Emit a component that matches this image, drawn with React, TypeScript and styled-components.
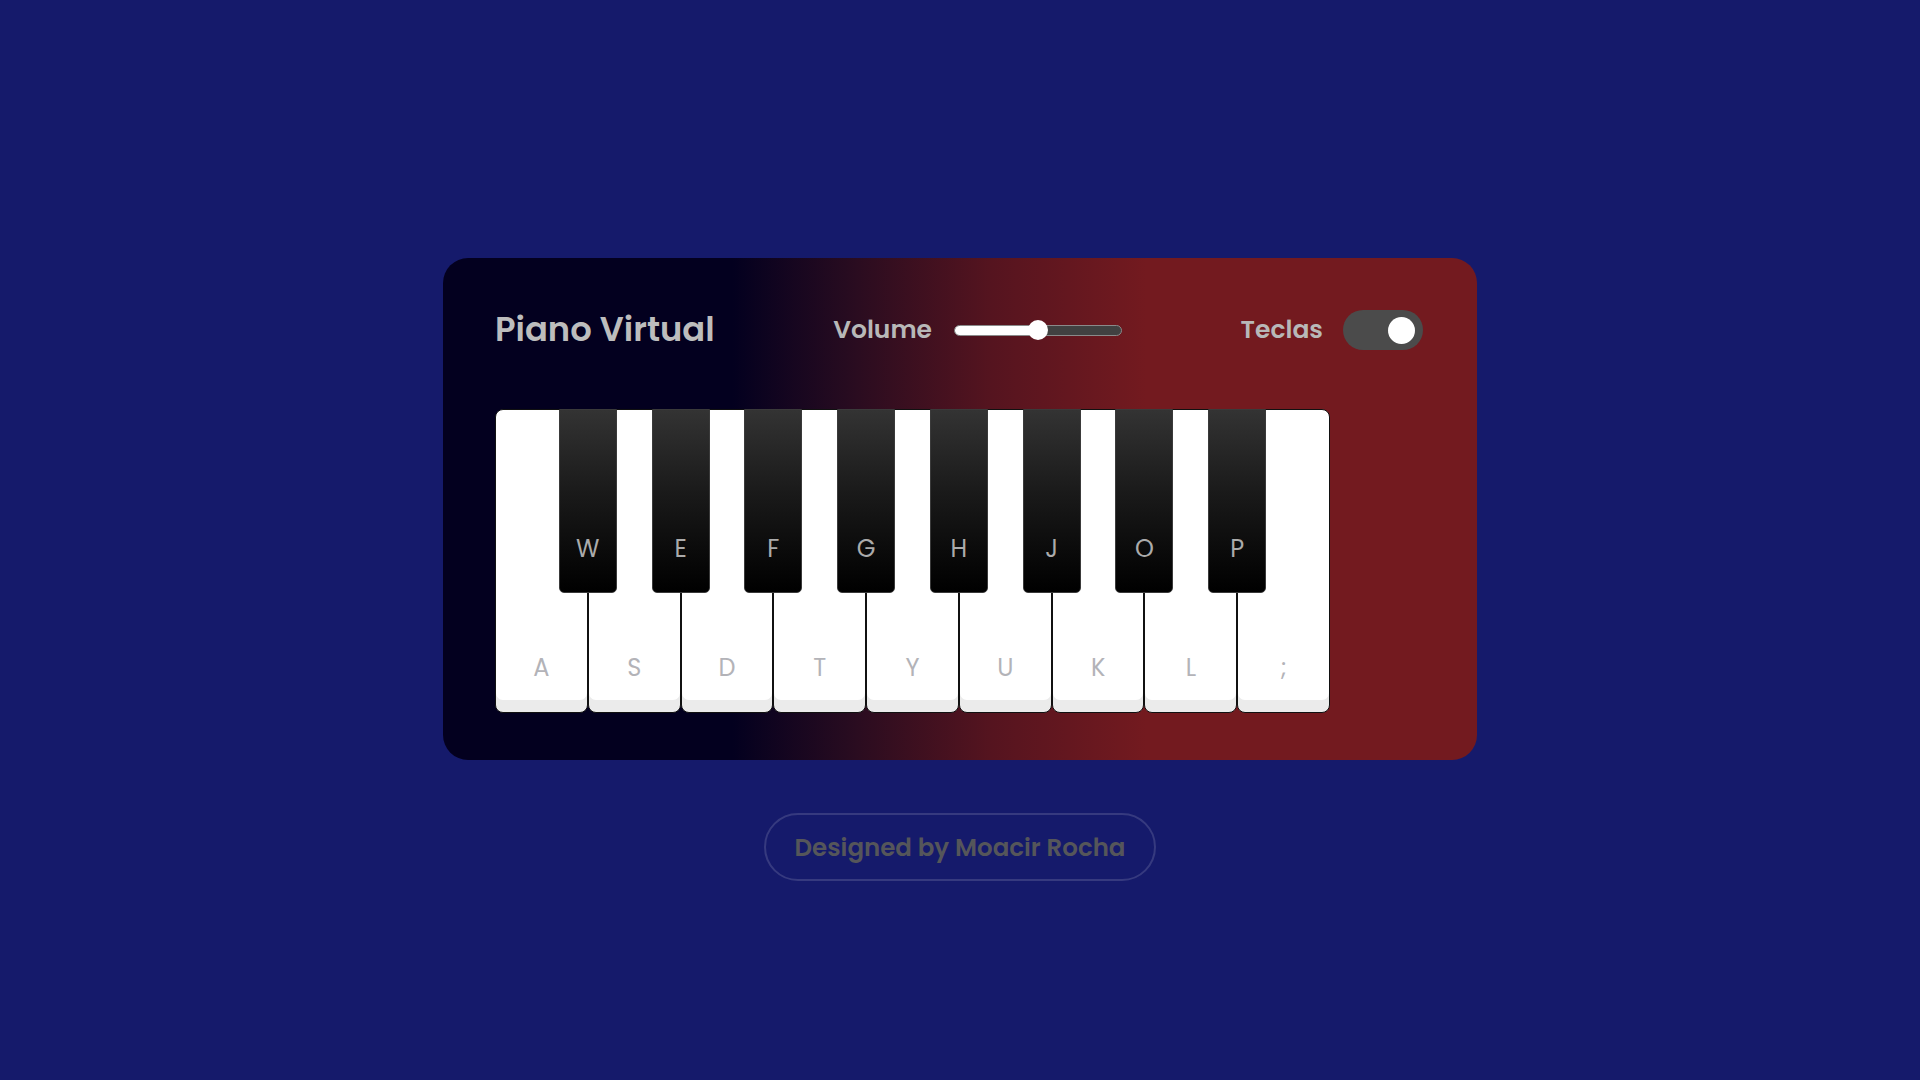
import React from 'react';
import styled, { createGlobalStyle } from 'styled-components';

const GlobalStyle = createGlobalStyle`
  * {
    box-sizing: border-box;
  }

  body {
    margin: 0;
    background: #151a6b;
    font-family: 'Poppins', 'Inter', 'Noto Sans', sans-serif;
  }
`;

const Page = styled.main`
  min-height: 100vh;
  display: flex;
  flex-direction: column;
  align-items: center;
  padding-top: 258px;
  gap: 53px;
`;

const Card = styled.section`
  width: 1034px;
  height: 502px;
  padding: 52px 54px 0 52px;
  border-radius: 25px;
  background: linear-gradient(90deg, #03001f 0%, #03001f 28%, #2a0c20 40%, #55141f 53%, #731a1f 68%, #731a1f 100%);
`;

const Header = styled.header`
  height: 40px;
  display: flex;
  align-items: center;
  justify-content: space-between;
`;

const Title = styled.h1`
  margin: 0;
  font-size: 33.8px;
  font-weight: 600;
  color: #bdbdbd;
`;

const Control = styled.div`
  display: flex;
  align-items: center;
  gap: ${({ $gap }: { $gap: number }) => $gap}px;
`;

const Label = styled.span`
  font-size: 25px;
  font-weight: 600;
  color: #b8b8b8;
`;

const Track = styled.div`
  position: relative;
  width: 168px;
  height: 11px;
  border-radius: 6px;
  background: #414141;
  border: 1px solid #8a8a8a;
`;

const Fill = styled.div`
  height: 100%;
  border-radius: 6px;
  background: #fff;
`;

const Thumb = styled.div`
  position: absolute;
  top: 50%;
  width: 20px;
  height: 20px;
  margin-left: -10px;
  margin-top: -10px;
  border-radius: 50%;
  background: #fff;
`;

const Switch = styled.div`
  width: 80px;
  height: 40px;
  border-radius: 20px;
  background: #4b4b4b;
  display: flex;
  align-items: center;
  justify-content: ${({ $on }: { $on: boolean }) => ($on ? 'flex-end' : 'flex-start')};
  padding: 0 8px;
`;

const Knob = styled.div`
  width: 27px;
  height: 27px;
  border-radius: 50%;
  background: #fff;
`;

const Keyboard = styled.div`
  margin-top: 59px;
  width: 835px;
  height: 304px;
  display: flex;
`;

const WhiteKey = styled.div<{ $first?: boolean; $last?: boolean }>`
  position: relative;
  flex: 1;
  display: flex;
  align-items: flex-end;
  justify-content: center;
  padding-bottom: 27px;
  background: #fff;
  border: 1px solid #111;
  border-radius: ${({ $first, $last }) =>
    `${$first ? 8 : 0}px ${$last ? 8 : 0}px 8px 8px`};
  box-shadow: inset 0 -12px 0 #ebebeb;
  font-size: 24px;
  color: #b3b3b8;
`;

const BlackKey = styled.div`
  position: absolute;
  z-index: 2;
  top: -1px;
  right: -30px;
  width: 58px;
  height: 184px;
  display: flex;
  align-items: flex-end;
  justify-content: center;
  padding-bottom: 26px;
  border: 1px solid #3a3a3a;
  border-radius: 0 0 5px 5px;
  background: linear-gradient(180deg, #333 0%, #1a1a1a 45%, #000 100%);
  font-size: 24px;
  color: #ababab;
`;

const Credit = styled.footer`
  height: 68px;
  display: flex;
  align-items: center;
  padding: 0 29px;
  border: 2px solid rgba(255, 255, 255, 0.14);
  border-radius: 34px;
  font-size: 24.5px;
  font-weight: 600;
  color: #55565a;
`;

const whites = ['A', 'S', 'D', 'T', 'Y', 'U', 'K', 'L', ';'];
const blacks = ['W', 'E', 'F', 'G', 'H', 'J', 'O', 'P'];

const volume = 0.5;

const App: React.FunctionComponent = () => (
  <>
    <GlobalStyle />
    <Page>
      <Card>
        <Header>
          <Title>Piano Virtual</Title>
          <Control $gap={22}>
            <Label>Volume</Label>
            <Track>
              <Fill style={{ width: `${volume * 100}%` }} />
              <Thumb style={{ left: `${volume * 100}%` }} />
            </Track>
          </Control>
          <Control $gap={20}>
            <Label>Teclas</Label>
            <Switch $on>
              <Knob />
            </Switch>
          </Control>
        </Header>
        <Keyboard>
          {whites.map((key, index) => (
            <WhiteKey key={key} $first={index === 0} $last={index === whites.length - 1}>
              {key}
              {blacks[index] && <BlackKey>{blacks[index]}</BlackKey>}
            </WhiteKey>
          ))}
        </Keyboard>
      </Card>
      <Credit>Designed by Moacir Rocha</Credit>
    </Page>
  </>
);

export default App;
